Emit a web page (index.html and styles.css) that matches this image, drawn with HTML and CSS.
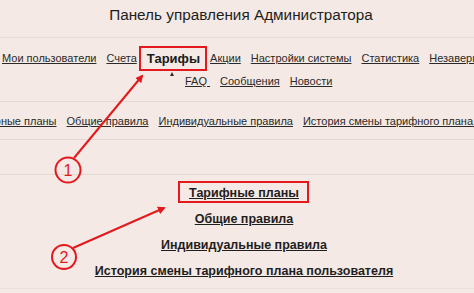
FILE: index.html
```html
<!DOCTYPE html>
<html lang="ru">
<head>
<meta charset="utf-8">
<link rel="stylesheet" href="styles.css">
</head>
<body>
<div class="page">
  <header class="header">Панель управления Администратора</header>
  <nav class="menu">
    <div class="menu-row">
      <a href="#">Мои пользователи</a>
      <a href="#">Счета</a>
      <a href="#" class="current">Тарифы</a>
      <a href="#">Акции</a>
      <a href="#">Настройки системы</a>
      <a href="#">Статистика</a>
      <a href="#">Незавершенные</a>
    </div>
    <div class="submenu-row">
      <a href="#">FAQ&nbsp;</a>
      <a href="#">Сообщения</a>
      <a href="#">Новости</a>
    </div>
  </nav>
  <div class="tabs">
    <a href="#">Тарифные планы</a>
    <a href="#">Общие правила</a>
    <a href="#">Индивидуальные правила</a>
    <a href="#">История смены тарифного плана пользователя</a>
  </div>
  <div class="spacer"></div>
  <main class="content">
    <a href="#" class="boxed">Тарифные планы</a>
    <a href="#">Общие правила</a>
    <a href="#">Индивидуальные правила</a>
    <a href="#">История смены тарифного плана пользователя</a>
  </main>
  <svg class="annot" width="474" height="293" viewBox="0 0 474 293">
    <defs>
      <marker id="ah" markerWidth="8" markerHeight="8" refX="6" refY="4" orient="auto" markerUnits="userSpaceOnUse">
        <path d="M0,0 L8,4 L0,8 Z" fill="#e3191e"/>
      </marker>
    </defs>
    <line x1="74" y1="158" x2="142" y2="76" stroke="#e3191e" stroke-width="2" marker-end="url(#ah)"/>
    <circle cx="68" cy="170" r="12.5" fill="none" stroke="#e3191e" stroke-width="2"/>
    <text x="68" y="176" class="num">1</text>
    <line x1="73" y1="248" x2="164" y2="208" stroke="#e3191e" stroke-width="2" marker-end="url(#ah)"/>
    <circle cx="64" cy="257" r="12" fill="none" stroke="#e3191e" stroke-width="2"/>
    <text x="64" y="263" class="num">2</text>
  </svg>
</div>
</body>
</html>
```

FILE: styles.css
```css
html, body {
  margin: 0;
  padding: 0;
  background: #f4e9e4;
}
body {
  font-family: "Liberation Sans", Arial, sans-serif;
  color: #2a2a2a;
  width: 474px;
  height: 293px;
  overflow: hidden;
}
.page {
  position: relative;
  width: 474px;
  height: 293px;
  overflow: hidden;
}
a {
  color: #2a2a2a;
  text-decoration: underline;
  white-space: nowrap;
}
.header {
  height: 30px;
  padding-bottom: 7px;
  padding-left: 8px;
  display: flex;
  align-items: center;
  justify-content: center;
  font-size: 15.3px;
  color: #1e1e1e;
  border-bottom: 1px solid #e8dcd6;
}
.menu {
  padding-bottom: 12px;
  border-bottom: 1px solid #e6d9d3;
}
.menu-row {
  display: flex;
  gap: 10px;
  padding-left: 2px;
  margin-top: 8px;
  height: 24px;
  align-items: center;
  font-size: 11px;
  white-space: nowrap;
}
.menu-row .current {
  position: relative;
  font-weight: bold;
  font-size: 13px;
  text-decoration: none;
  color: #1a1a1a;
}
.menu-row .current::after {
  content: "";
  position: absolute;
  left: -8px;
  right: -7px;
  top: -5px;
  bottom: -5px;
  border: 2px solid #e3191e;
}
.menu-row .current::before {
  content: "";
  position: absolute;
  left: 23px;
  bottom: -10px;
  width: 0;
  height: 0;
  border-left: 2.5px solid transparent;
  border-right: 2.5px solid transparent;
  border-bottom: 4px solid #2a2a2a;
}
.submenu-row {
  display: flex;
  gap: 10px;
  padding-left: 185px;
  margin-top: 3px;
  height: 16px;
  align-items: center;
  font-size: 11px;
}
.tabs {
  height: 37px;
  display: flex;
  gap: 10px;
  justify-content: center;
  align-items: center;
  padding-left: 39px;
  font-size: 11px;
  border-bottom: 1px solid #e6d9d3;
  white-space: nowrap;
}
.spacer {
  height: 34px;
  border-bottom: 1px solid #e6d9d3;
}
.content {
  display: flex;
  flex-direction: column;
  align-items: center;
  padding: 5px 0 4px 14px;
  border-bottom: 1px solid #ece2dd;
}
.content a {
  height: 26px;
  line-height: 26px;
  font-size: 12.5px;
  font-weight: bold;
  color: #1e1e1e;
}
.content .boxed {
  position: relative;
}
.content .boxed::after {
  content: "";
  position: absolute;
  left: -11px;
  right: -10px;
  top: 1px;
  bottom: 3px;
  border: 2px solid #e3191e;
}
.annot {
  position: absolute;
  left: 0;
  top: 0;
  pointer-events: none;
}
.num {
  font-family: "Liberation Sans", Arial, sans-serif;
  font-size: 16px;
  fill: #e3191e;
  text-anchor: middle;
}
```
